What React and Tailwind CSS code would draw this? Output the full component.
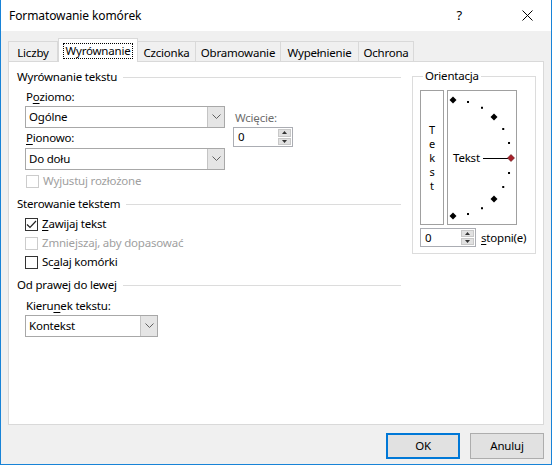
import { useState } from "react";

const font = { fontFamily: '"Segoe UI", "Noto Sans", "Open Sans", sans-serif' };

const Chevron = () => (
  <svg width="9" height="6" viewBox="0 0 9 6" className="block">
    <polyline points="0.5,0.5 4.5,4.5 8.5,0.5" fill="none" stroke="#606060" strokeWidth="1" />
  </svg>
);

// underline one letter, like Windows accelerator keys
const Acc = ({ text, at }) => (
  <>
    {text.slice(0, at)}
    <span className="underline underline-offset-2">{text[at]}</span>
    {text.slice(at + 1)}
  </>
);

const GroupHeader = ({ children }) => (
  <div className="flex items-center h-[16px]">
    <span className="whitespace-nowrap">{children}</span>
    <div className="flex-1 h-px bg-[#dcdcdc] ml-[6px]"></div>
  </div>
);

const Select = ({ value, width }) => (
  <div className={`flex h-[22px] border border-[#a8a8a8] bg-white ${width}`}>
    <div className="flex-1 flex items-center pl-[3px]">{value}</div>
    <div className="w-[17px] flex items-center justify-center bg-[#e5e5e5] border-l border-[#c4c4c4]">
      <Chevron />
    </div>
  </div>
);

const Spin = ({ value, width }) => (
  <div className={`flex border border-[#abadb3] bg-white ${width}`}>
    <div className="flex-1 flex items-center pl-[4px]">{value}</div>
    <div className="w-[15px] flex flex-col gap-px p-px">
      <div className="flex-1 bg-[#e1e1e1] border border-[#c8c8c8] flex items-center justify-center">
        <svg width="5" height="3" viewBox="0 0 5 3"><polygon points="0,3 2.5,0 5,3" fill="#333" /></svg>
      </div>
      <div className="flex-1 bg-[#e1e1e1] border border-[#c8c8c8] flex items-center justify-center">
        <svg width="5" height="3" viewBox="0 0 5 3"><polygon points="0,0 2.5,3 5,0" fill="#333" /></svg>
      </div>
    </div>
  </div>
);

const Checkbox = ({ checked, disabled, children }) => (
  <div className={`flex items-center h-[16px] gap-[4px] ${disabled ? "text-[#a0a0a0]" : ""}`}>
    <div
      className={`w-[13px] h-[13px] border bg-white flex items-center justify-center ${
        disabled ? "border-[#cccccc]" : "border-[#333333]"
      }`}
    >
      {checked && (
        <svg width="11" height="9" viewBox="0 0 11 9">
          <polyline points="1,4.5 4,7.5 10,1" fill="none" stroke="#222" strokeWidth="1.2" />
        </svg>
      )}
    </div>
    <span>{children}</span>
  </div>
);

const Dial = () => {
  const cx = 5;
  const cy = 67;
  const r = 58;
  const big = [90, 45, -45, -90];
  const small = [75, 60, 30, 15, -15, -30, -60, -75];
  const pt = (a) => [cx + r * Math.cos((a * Math.PI) / 180), cy - r * Math.sin((a * Math.PI) / 180)];
  return (
    <svg width="68" height="133" viewBox="0 0 68 133" className="block">
      {small.map((a) => {
        const [x, y] = pt(a);
        return <rect key={a} x={x - 1} y={y - 1} width="2" height="2" fill="#000" />;
      })}
      {big.map((a) => {
        const [x, y] = pt(a);
        return (
          <polygon
            key={a}
            points={`${x},${y - 3.5} ${x + 3.5},${y} ${x},${y + 3.5} ${x - 3.5},${y}`}
            fill="#000"
          />
        );
      })}
      <text x="5" y="71" fontSize="11.5" letterSpacing="-0.2" fill="#000" style={font}>
        Tekst
      </text>
      <line x1="35" y1="67.5" x2="60" y2="67.5" stroke="#000" strokeWidth="1" />
      <polygon points="63,63.5 66.5,67 63,70.5 59.5,67" fill="#a8202a" stroke="#5a0d12" strokeWidth="0.6" />
    </svg>
  );
};

const tabs = [
  { name: "Liczby", w: "w-[50px]" },
  { name: "Wyrównanie", w: "w-[80px]" },
  { name: "Czcionka", w: "w-[59px]" },
  { name: "Obramowanie", w: "w-[86px]" },
  { name: "Wypełnienie", w: "w-[79px]" },
  { name: "Ochrona", w: "w-[56px]" },
];

export default function App() {
  const [active] = useState("Wyrównanie");

  return (
    <div
      className="w-[552px] h-[465px] bg-[#f0f0f0] border-x border-b border-[#1883d7] text-[11.5px] tracking-[-0.2px] text-black flex flex-col"
      style={font}
    >
      {/* title bar */}
      <div className="h-[31px] bg-white flex items-center shrink-0">
        <span className="ml-[8px] flex-1 text-[12px] tracking-[-0.1px]">Formatowanie komórek</span>
        <span className="text-[13px] mr-[60px]">?</span>
        <svg width="11" height="11" viewBox="0 0 11 11" className="mr-[18px]">
          <path d="M0.5 0.5 L10.5 10.5 M10.5 0.5 L0.5 10.5" stroke="#000" strokeWidth="1" />
        </svg>
      </div>

      {/* tabs */}
      <div className="flex items-end h-[30px] ml-[7px] shrink-0 relative z-10">
        {tabs.map((t) =>
          t.name === active ? (
            <div
              key={t.name}
              className={`${t.w} h-[24px] -mb-px bg-white border border-b-0 border-[#d9d9d9] flex items-center justify-center pt-[1px]`}
            >
              <span className="border border-dotted border-black px-[2px] leading-[14px]">{t.name}</span>
            </div>
          ) : (
            <div
              key={t.name}
              className={`${t.w} h-[20px] bg-[#f0f0f0] border border-b-0 border-[#d9d9d9] -ml-px first:ml-0 flex items-center justify-center pt-[2px]`}
            >
              {t.name}
            </div>
          )
        )}
      </div>

      {/* panel */}
      <div className="ml-[7px] w-[536px] h-[364px] bg-white border border-[#d9d9d9] flex shrink-0">
        {/* left column */}
        <div className="w-[384px] ml-[8px] flex flex-col">
          <div className="mt-[7px]">
            <GroupHeader>Wyrównanie tekstu</GroupHeader>
          </div>
          <div className="flex ml-[8px]">
            <div className="flex flex-col">
              <div className="mt-[4px] h-[16px] flex items-center pl-[1px]">
                <Acc text="Poziomo:" at={1} />
              </div>
              <div className="mt-[1px]">
                <Select value="Ogólne" width="w-[200px]" />
              </div>
              <div className="mt-[2px] h-[16px] flex items-center pl-[1px]">
                <Acc text="Pionowo:" at={0} />
              </div>
              <div className="mt-[2px]">
                <Select value="Do dołu" width="w-[200px]" />
              </div>
              <div className="mt-[3px] pl-[1px]">
                <Checkbox disabled>Wyjustuj rozłożone</Checkbox>
              </div>
            </div>
            <div className="flex flex-col ml-[8px]">
              <div className="mt-[25px] h-[16px] flex items-center pl-[2px] text-[#6d6d6d]">Wcięcie:</div>
              <div className="mt-[1px]">
                <Spin value="0" width="w-[60px] h-[20px]" />
              </div>
            </div>
          </div>

          <div className="mt-[7px]">
            <GroupHeader>Sterowanie tekstem</GroupHeader>
          </div>
          <div className="ml-[8px] mt-[4px]">
            <Checkbox checked>
              <Acc text="Zawijaj tekst" at={0} />
            </Checkbox>
          </div>
          <div className="ml-[8px] mt-[3px]">
            <Checkbox disabled>Zmniejszaj, aby dopasować</Checkbox>
          </div>
          <div className="ml-[8px] mt-[3px]">
            <Checkbox>
              <Acc text="Scalaj komórki" at={2} />
            </Checkbox>
          </div>

          <div className="mt-[7px]">
            <GroupHeader>Od prawej do lewej</GroupHeader>
          </div>
          <div className="ml-[9px] mt-[5px] h-[16px] flex items-center">
            <Acc text="Kierunek tekstu:" at={5} />
          </div>
          <div className="ml-[8px] mt-[1px]">
            <Select value="Kontekst" width="w-[133px]" />
          </div>
        </div>

        {/* right column */}
        <fieldset className="ml-[11px] mt-[6px] w-[124px] self-start border border-[#dcdcdc] pl-[7px] pb-[6px]">
          <legend className="ml-[3px] px-[2px] h-[16px] leading-[16px]">Orientacja</legend>
          <div className="flex gap-[3px] mt-[6px]">
            <div className="w-[24px] h-[135px] border border-[#a0a0a0] flex flex-col items-center justify-center text-[11px]">
              {"Tekst".split("").map((c, i) => (
                <span key={i} className="block h-[14px] leading-[14px]">
                  {c}
                </span>
              ))}
            </div>
            <div className="w-[70px] h-[135px] border border-[#a0a0a0]">
              <Dial />
            </div>
          </div>
          <div className="flex items-center mt-[3px]">
            <Spin value="0" width="w-[56px] h-[19px]" />
            <span className="ml-[5px]">
              <Acc text="stopni(e)" at={0} />
            </span>
          </div>
        </fieldset>
      </div>

      {/* buttons */}
      <div className="flex justify-end gap-[10px] mr-[7px] mt-[8px]">
        <button className="w-[74px] h-[26px] bg-[#e1e1e1] border-2 border-[#0078d7]">OK</button>
        <button className="w-[74px] h-[26px] bg-[#e1e1e1] border border-[#adadad]">Anuluj</button>
      </div>
    </div>
  );
}
